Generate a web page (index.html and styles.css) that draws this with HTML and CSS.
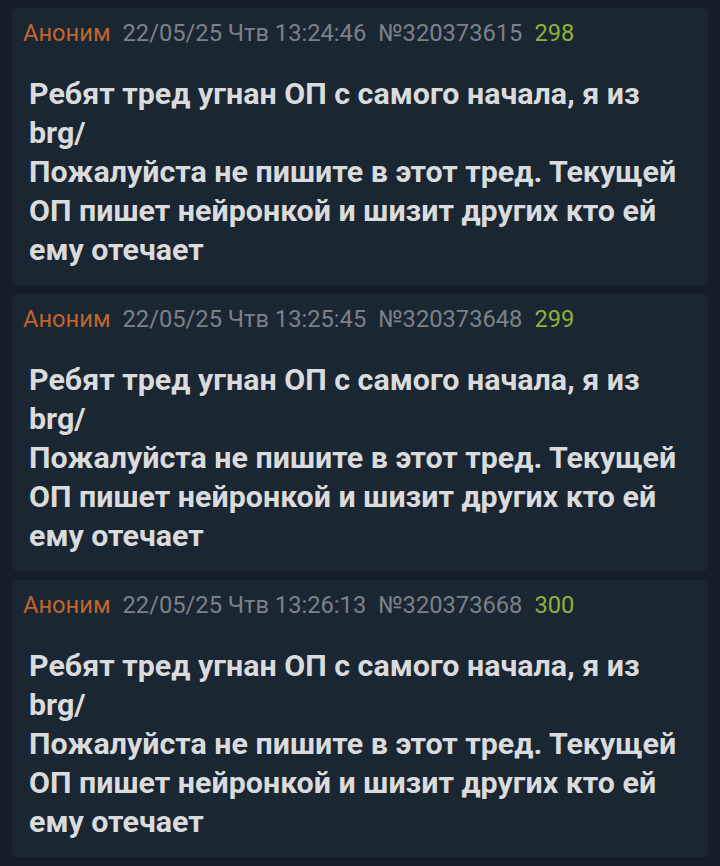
FILE: index.html
```html
<!DOCTYPE html>
<html lang="ru">
<head>
<meta charset="utf-8">
<link rel="stylesheet" href="styles.css">
</head>
<body>
<div class="thread">
  <div class="post">
    <div class="post-head"><span class="name">Аноним</span><span class="meta">22/05/25 Чтв 13:24:46</span><span class="meta">№320373615</span><span class="count">298</span></div>
    <div class="post-body">Ребят тред угнан ОП с самого начала, я из brg/<br>Пожалуйста не пишите в этот тред. Текущей ОП пишет нейронкой и шизит других кто ей ему отечает</div>
  </div>
  <div class="post">
    <div class="post-head"><span class="name">Аноним</span><span class="meta">22/05/25 Чтв 13:25:45</span><span class="meta">№320373648</span><span class="count">299</span></div>
    <div class="post-body">Ребят тред угнан ОП с самого начала, я из brg/<br>Пожалуйста не пишите в этот тред. Текущей ОП пишет нейронкой и шизит других кто ей ему отечает</div>
  </div>
  <div class="post">
    <div class="post-head"><span class="name">Аноним</span><span class="meta">22/05/25 Чтв 13:26:13</span><span class="meta">№320373668</span><span class="count">300</span></div>
    <div class="post-body">Ребят тред угнан ОП с самого начала, я из brg/<br>Пожалуйста не пишите в этот тред. Текущей ОП пишет нейронкой и шизит других кто ей ему отечает</div>
  </div>
</div>
</body>
</html>
```
FILE: styles.css
```css
html, body {
  margin: 0;
  padding: 0;
  background: #151d26;
}
.thread {
  display: flex;
  flex-direction: column;
  gap: 9px;
  padding: 8px 12px;
}
.post {
  background: #1b2633;
  border-radius: 6px;
  padding: 10px 16px 14px 11px;
  height: 277px;
  box-sizing: border-box;
}
.post-head {
  display: flex;
  gap: 12px;
  font-family: Roboto, "Noto Sans", sans-serif;
  font-size: 23.7px;
  line-height: 30px;
  color: #7c8187;
}
.name { color: #c0652b; }
.count { color: #8db13a; }
.post-body {
  margin-top: 26px;
  padding-left: 6px;
  font-family: Roboto, "Noto Sans", sans-serif;
  font-weight: bold;
  font-size: 30.4px;
  line-height: 39px;
  color: #dadbdc;
}
```
